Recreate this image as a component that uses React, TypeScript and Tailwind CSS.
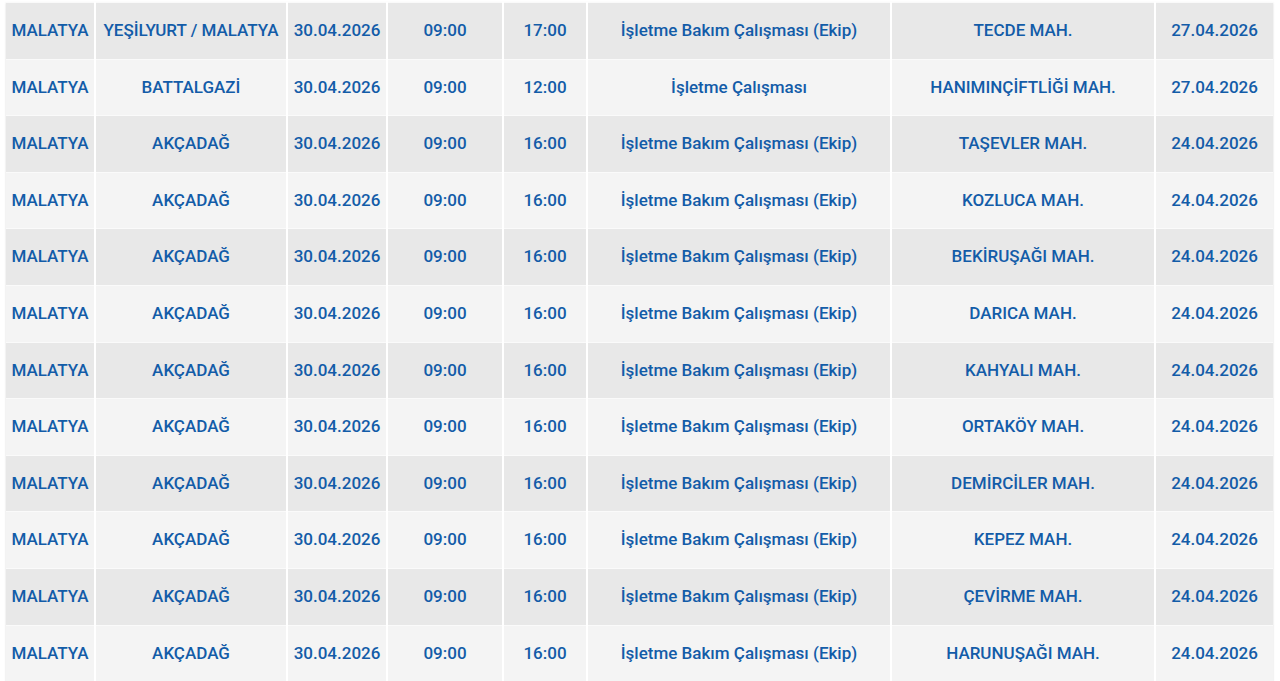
import React from "react";

const rows: string[][] = [
  ["MALATYA", "YEŞİLYURT / MALATYA", "30.04.2026", "09:00", "17:00", "İşletme Bakım Çalışması (Ekip)", "TECDE MAH.", "27.04.2026"],
  ["MALATYA", "BATTALGAZİ", "30.04.2026", "09:00", "12:00", "İşletme Çalışması", "HANIMINÇİFTLİĞİ MAH.", "27.04.2026"],
  ["MALATYA", "AKÇADAĞ", "30.04.2026", "09:00", "16:00", "İşletme Bakım Çalışması (Ekip)", "TAŞEVLER MAH.", "24.04.2026"],
  ["MALATYA", "AKÇADAĞ", "30.04.2026", "09:00", "16:00", "İşletme Bakım Çalışması (Ekip)", "KOZLUCA MAH.", "24.04.2026"],
  ["MALATYA", "AKÇADAĞ", "30.04.2026", "09:00", "16:00", "İşletme Bakım Çalışması (Ekip)", "BEKİRUŞAĞI MAH.", "24.04.2026"],
  ["MALATYA", "AKÇADAĞ", "30.04.2026", "09:00", "16:00", "İşletme Bakım Çalışması (Ekip)", "DARICA MAH.", "24.04.2026"],
  ["MALATYA", "AKÇADAĞ", "30.04.2026", "09:00", "16:00", "İşletme Bakım Çalışması (Ekip)", "KAHYALI MAH.", "24.04.2026"],
  ["MALATYA", "AKÇADAĞ", "30.04.2026", "09:00", "16:00", "İşletme Bakım Çalışması (Ekip)", "ORTAKÖY MAH.", "24.04.2026"],
  ["MALATYA", "AKÇADAĞ", "30.04.2026", "09:00", "16:00", "İşletme Bakım Çalışması (Ekip)", "DEMİRCİLER MAH.", "24.04.2026"],
  ["MALATYA", "AKÇADAĞ", "30.04.2026", "09:00", "16:00", "İşletme Bakım Çalışması (Ekip)", "KEPEZ MAH.", "24.04.2026"],
  ["MALATYA", "AKÇADAĞ", "30.04.2026", "09:00", "16:00", "İşletme Bakım Çalışması (Ekip)", "ÇEVİRME MAH.", "24.04.2026"],
  ["MALATYA", "AKÇADAĞ", "30.04.2026", "09:00", "16:00", "İşletme Bakım Çalışması (Ekip)", "HARUNUŞAĞI MAH.", "24.04.2026"],
];

const widths = ["w-[89px]", "w-[192px]", "w-[100px]", "w-[116px]", "w-[84px]", "w-[304px]", "w-[264px]", "w-[118px]"];

export default function App() {
  return (
    <div className="w-[1280px] h-[681px] overflow-hidden bg-white pt-[2px] pl-[6px] font-['Roboto',sans-serif]">
      <table className="table-fixed border-collapse w-[1267px] shadow-[0_1px_2px_rgba(0,0,0,0.15)]">
        <colgroup>
          {widths.map((w, i) => (
            <col key={i} className={w} />
          ))}
        </colgroup>
        <tbody>
          {rows.map((r, i) => (
            <tr key={i} className={i % 2 === 0 ? "bg-[#e8e8e8]" : "bg-[#f4f4f4]"}>
              {r.map((c, j) => (
                <td
                  key={j}
                  className={`h-[56.6px] p-0 text-center align-middle text-[17px] font-medium text-[#135ca8] whitespace-nowrap border-x-2 border-white border-y border-y-[#fafafa] ${j === 0 ? "border-l-0" : ""} ${j === 7 ? "border-r-0" : ""}`}
                >
                  {c}
                </td>
              ))}
            </tr>
          ))}
        </tbody>
      </table>
    </div>
  );
}
